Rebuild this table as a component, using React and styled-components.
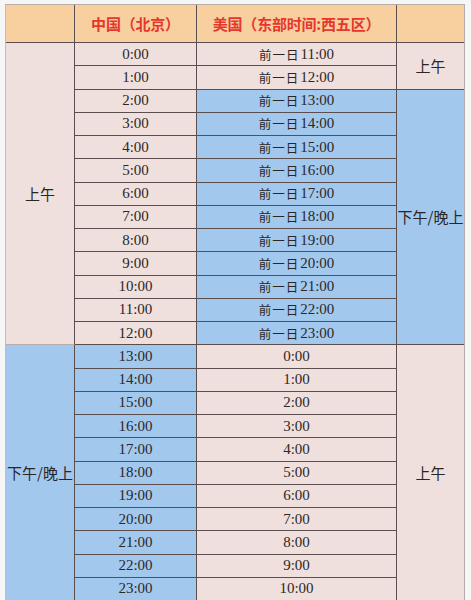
import React from "react";
import styled, { createGlobalStyle } from "styled-components";

const Global = createGlobalStyle`
  html, body { margin: 0; padding: 0; background: #f7f6f6; }
  body { font-family: "Liberation Serif", "Noto Sans CJK SC", serif; }
`;

const PINK = "#efe0dd";
const BLUE = "#a3c8ee";
const ORANGE = "#f8cf9f";
const LINE = "#5a4f4e";

const Page = styled.div`
  padding: 4px 0 0 5px;
  height: 600px;
  overflow: hidden;
  box-sizing: border-box;
`;

const Grid = styled.div`
  display: grid;
  grid-template-columns: 69px 122px 200px 67px;
  grid-template-rows: 38px repeat(24, 23.25px);
  width: max-content;
  border-top: 1px solid #b5acaa;
  border-left: 1px solid #c4bcba;
  border-right: 1px solid #b5acaa;
`;

const Cell = styled.div`
  box-sizing: border-box;
  display: flex;
  align-items: center;
  justify-content: center;
  white-space: nowrap;
  background: ${(p) => p.$bg};
  border-right: ${(p) => (p.$last ? "none" : `1px solid ${LINE}`)};
  border-bottom: 1px solid ${(p) => p.$soft ? "rgba(90,79,78,0.35)" : LINE};
  grid-row: ${(p) => p.$row} / span ${(p) => p.$span || 1};
  grid-column: ${(p) => p.$col};
  color: #2a2626;
  overflow: visible;
`;

const HeadText = styled.span`
  font-family: "Noto Sans CJK SC", sans-serif;
  font-weight: 700;
  font-size: 15px;
  color: #e5372b;
  letter-spacing: -0.2px;
`;

const Period = styled.span`
  font-family: "Noto Sans CJK SC", sans-serif;
  font-size: 15px;
  color: #2a2626;
`;

const Time = styled.span`
  font-family: "Liberation Serif", serif;
  font-size: 15px;
  color: #2c2727;
`;

const Prev = styled.span`
  font-family: "Noto Sans CJK SC", sans-serif;
  font-size: 12.5px;
  letter-spacing: 1px;
  margin-right: 1px;
`;

const fmt = (h) => `${h}:00`;

export default function App() {
  const rows = Array.from({ length: 24 }, (_, h) => {
    const us = (h + 11) % 24;
    const prev = h <= 12;
    return {
      cn: fmt(h),
      us: fmt(us),
      prev,
      cnBg: h <= 12 ? PINK : BLUE,
      usBg: h <= 1 || h >= 13 ? (h >= 13 ? PINK : PINK) : BLUE,
    };
  });

  return (
    <>
      <Global />
      <Page>
        <Grid>
          <Cell $row={1} $col={1} $bg={ORANGE} />
          <Cell $row={1} $col={2} $bg={ORANGE}>
            <HeadText>中国（北京）</HeadText>
          </Cell>
          <Cell $row={1} $col={3} $bg={ORANGE}>
            <HeadText>美国（东部时间:西五区）</HeadText>
          </Cell>
          <Cell $row={1} $col={4} $bg={ORANGE} $last />

          <Cell $row={2} $span={13} $col={1} $bg={PINK} $soft>
            <Period>上午</Period>
          </Cell>
          <Cell $row={15} $span={11} $col={1} $bg={BLUE}>
            <Period>下午/晚上</Period>
          </Cell>

          {rows.map((r, i) => (
            <React.Fragment key={i}>
              <Cell $row={i + 2} $col={2} $bg={r.cnBg}>
                <Time>{r.cn}</Time>
              </Cell>
              <Cell $row={i + 2} $col={3} $bg={i <= 1 || i >= 13 ? PINK : BLUE}>
                {r.prev && <Prev>前一日</Prev>}
                <Time>{r.us}</Time>
              </Cell>
            </React.Fragment>
          ))}

          <Cell $row={2} $span={2} $col={4} $bg={PINK} $last>
            <Period>上午</Period>
          </Cell>
          <Cell $row={4} $span={11} $col={4} $bg={BLUE} $last>
            <Period>下午/晚上</Period>
          </Cell>
          <Cell $row={15} $span={11} $col={4} $bg={PINK} $last>
            <Period>上午</Period>
          </Cell>
        </Grid>
      </Page>
    </>
  );
}
